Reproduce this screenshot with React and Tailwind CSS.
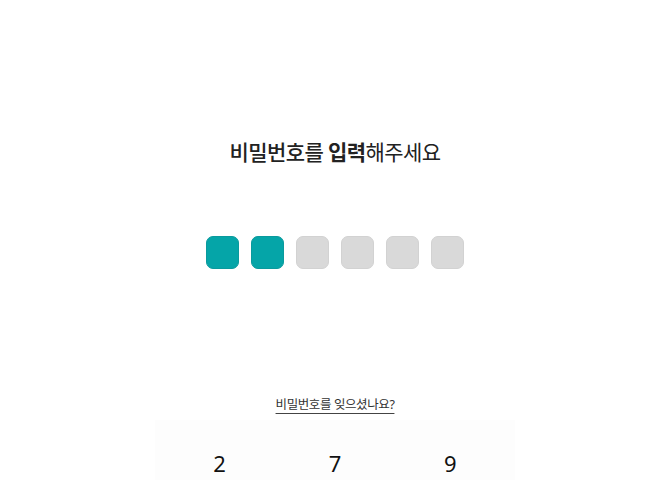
import React from 'react'

const filled = 2
const keys = ['2', '7', '9']

export default function App() {
  return (
    <div
      className="w-[670px] h-[480px] bg-white flex flex-col items-center overflow-hidden"
      style={{ fontFamily: '"Noto Sans", "Noto Sans CJK KR", sans-serif' }}
    >
      <h1 className="mt-[136px] h-[32px] leading-[32px] text-[21px] text-[#222] tracking-[-0.6px]">
        <span className="font-medium">비밀번호를 </span>
        <span className="font-bold">입력</span>
        <span className="font-normal">해주세요</span>
      </h1>

      <div className="mt-[68px] flex gap-[12px]">
        {[0, 1, 2, 3, 4, 5].map((i) => (
          <div
            key={i}
            className={
              i < filled
                ? 'w-[33px] h-[33px] rounded-[7px] bg-[#05a5a8] border border-[#0a9a9d]'
                : 'w-[33px] h-[33px] rounded-[7px] bg-[#d9d9d9] border border-[#d2d2d2]'
            }
          />
        ))}
      </div>

      <a className="mt-[127px] text-[12.5px] leading-[18px] text-[#333] underline underline-offset-[4px] decoration-[#444] tracking-[-0.4px]">
        비밀번호를 잊으셨나요?
      </a>

      <div className="mt-[6px] w-[360px] flex-1 bg-[#fdfdfd] grid grid-cols-3 px-[7px] pt-[29px]">
        {keys.map((k) => (
          <div key={k} className="text-center text-[22px] leading-[28px] text-[#111]">
            {k}
          </div>
        ))}
      </div>
    </div>
  )
}
